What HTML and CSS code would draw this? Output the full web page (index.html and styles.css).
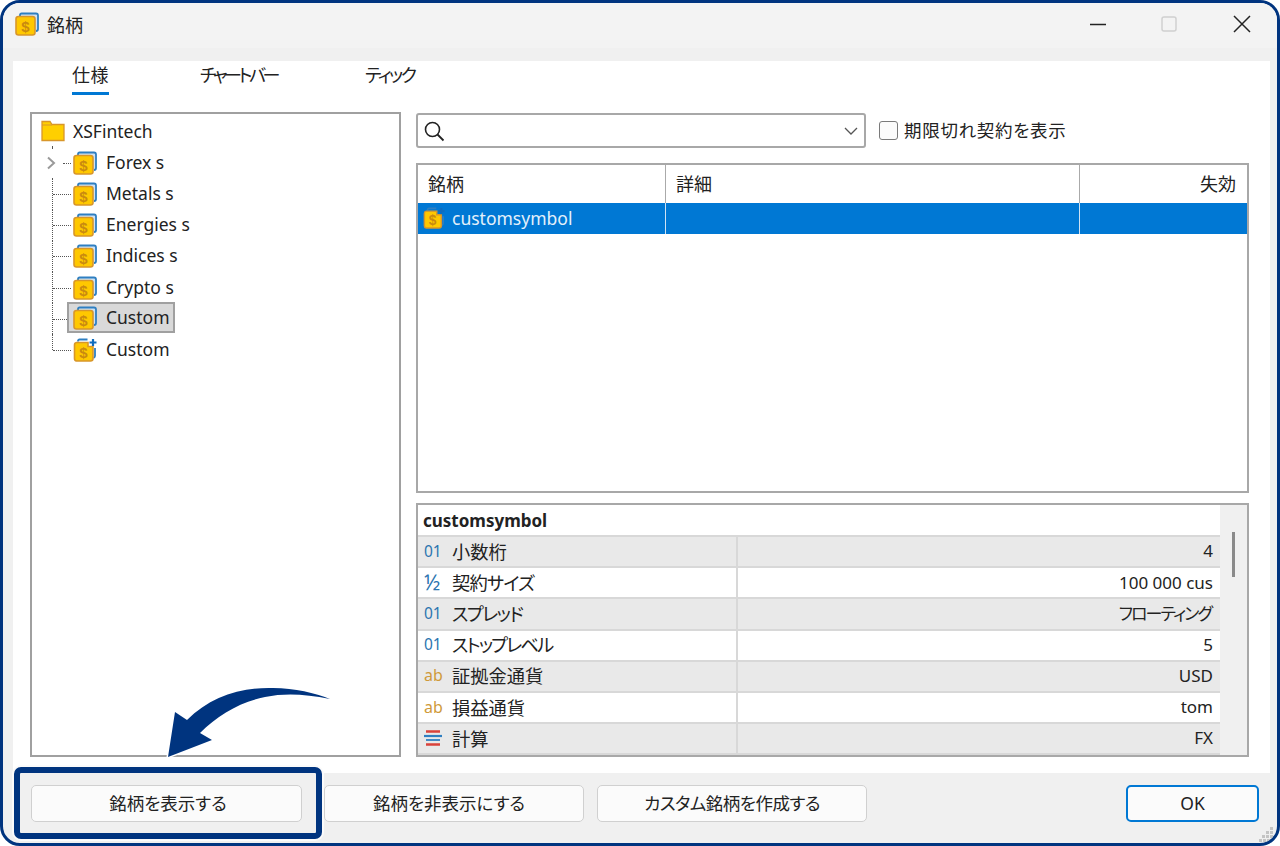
FILE: index.html
```html
<!DOCTYPE html>
<html lang="ja">
<head>
<meta charset="utf-8">
<title>銘柄</title>
<link rel="stylesheet" href="styles.css">
</head>
<body>
<svg class="defs" width="0" height="0" aria-hidden="true">
  <defs>
    <symbol id="coin" viewBox="0 0 24 24">
      <path d="M5 4V3a1.500 1.500 0 0 1 1.500-1.500h14.500a2 2 0 0 1 2 2v13.500a2 2 0 0 1-2 2" fill="#cfe2f3" stroke="#2f7fc1" stroke-width="1.800"/>
      <rect x="1" y="4.500" width="19" height="18.500" rx="2.500" fill="#ffc800" stroke="#d8962a" stroke-width="1.600"/>
      <text x="10.500" y="19.600" class="coin-d">$</text>
    </symbol>
    <symbol id="coinplus" viewBox="0 0 24 24">
      <path d="M5 3.500V3a1.500 1.500 0 0 1 1.500-1.500h8M22 10v8a2 2 0 0 1-1.500 1.800" fill="none" stroke="#2f7fc1" stroke-width="1.800"/>
      <path d="M3.500 4.500h11.500v4h5v12a2.500 2.500 0 0 1-2.500 2.500h-14a2.500 2.500 0 0 1-2-2.500v-13.500a2.500 2.500 0 0 1 2-2.500z" fill="#ffc800" stroke="#d8962a" stroke-width="1.600"/>
      <path d="M20 1v7M16.500 4.500h7" stroke="#0f6cbd" stroke-width="2.200"/>
      <text x="10.500" y="19.600" class="coin-d">$</text>
    </symbol>
  </defs>
</svg>
<div class="window">
  <header class="titlebar">
    <svg class="ic-title"><use href="#coin"/></svg>
    <span class="title">銘柄</span>
    <span class="controls">
      <svg class="ctl" viewBox="0 0 20 20"><path d="M1 10.500h16" stroke="#222" stroke-width="1.500"/></svg>
      <svg class="ctl" viewBox="0 0 20 20"><rect x="3" y="3" width="14" height="14" rx="2" fill="none" stroke="#d0d0d0" stroke-width="1.500"/></svg>
      <svg class="ctl" viewBox="0 0 20 20"><path d="M2 2l16 16M18 2L2 18" stroke="#222" stroke-width="1.500"/></svg>
    </span>
  </header>
  <main class="main">
    <nav class="tabs">
      <span class="tab active">仕様</span>
      <span class="tab t2">チャートバー</span>
      <span class="tab t3">ティック</span>
    </nav>
    <div class="panes">
      <section class="tree">
        <div class="node root">
          <svg class="ic-folder" viewBox="0 0 24 24"><path d="M1 1.500h8l2 3h12v16H1z" fill="#ffcf00" stroke="#d8962a" stroke-width="1.300"/><path d="M1 5h10" stroke="#d8962a" stroke-width="1"/></svg>
          <span>XSFintech</span>
        </div>
        <div class="node child first">
          <svg class="chev" viewBox="0 0 10 14"><path d="M2 1.500l6 5.500-6 5.500" fill="none" stroke="#9a9a9a" stroke-width="2"/></svg>
          <svg class="ic"><use href="#coin"/></svg><span>Forex s</span>
        </div>
        <div class="node child"><svg class="ic"><use href="#coin"/></svg><span>Metals s</span></div>
        <div class="node child"><svg class="ic"><use href="#coin"/></svg><span>Energies s</span></div>
        <div class="node child"><svg class="ic"><use href="#coin"/></svg><span>Indices s</span></div>
        <div class="node child"><svg class="ic"><use href="#coin"/></svg><span>Crypto s</span></div>
        <div class="node child selected"><div class="sel"><svg class="ic"><use href="#coin"/></svg><span>Custom</span></div></div>
        <div class="node child last"><svg class="ic"><use href="#coinplus"/></svg><span>Custom</span></div>
      </section>
      <section class="right">
        <div class="searchrow">
          <div class="search">
            <svg class="mag" viewBox="0 0 22 22"><circle cx="9.500" cy="9.500" r="7" fill="none" stroke="#222" stroke-width="1.600"/><path d="M14.500 14.500l6 6" stroke="#222" stroke-width="1.800"/></svg>
            <svg class="drop" viewBox="0 0 14 8"><path d="M1 1l6 6 6-6" fill="none" stroke="#555" stroke-width="1.300"/></svg>
          </div>
          <span class="check"></span>
          <span class="checklabel">期限切れ契約を表示</span>
        </div>
        <div class="list">
          <div class="lrow lhead">
            <span class="c1">銘柄</span><span class="c2">詳細</span><span class="c3">失効</span>
          </div>
          <div class="lrow lsel">
            <span class="c1"><svg class="ic-s"><use href="#coinplus"/></svg>customsymbol</span><span class="c2"></span><span class="c3"></span>
          </div>
        </div>
        <div class="props">
          <div class="ptable">
            <div class="ptitle">customsymbol</div>
            <div class="prow"><span class="pk"><i class="t blue">01</i>小数桁</span><span class="pv">4</span></div>
            <div class="prow alt"><span class="pk"><i class="t blue big">½</i><span class="k1">契約サイズ</span></span><span class="pv">100 000 cus</span></div>
            <div class="prow"><span class="pk"><i class="t blue">01</i><span class="k2">スプレッド</span></span><span class="pv"><span class="k3">フローティング</span></span></div>
            <div class="prow alt"><span class="pk"><i class="t blue">01</i><span class="k3">ストップレベル</span></span><span class="pv">5</span></div>
            <div class="prow"><span class="pk"><i class="t orange">ab</i>証拠金通貨</span><span class="pv">USD</span></div>
            <div class="prow alt"><span class="pk"><i class="t orange">ab</i>損益通貨</span><span class="pv">tom</span></div>
            <div class="prow"><span class="pk"><i class="t"><svg class="calc" viewBox="0 0 18 16"><path d="M2 1.500h14M2 14.500h14" stroke="#d9423a" stroke-width="2.400" fill="none"/><path d="M0 6h18" stroke="#2f7fc1" stroke-width="2.200"/><path d="M2 10h14" stroke="#2f7fc1" stroke-width="1.800"/></svg></i>計算</span><span class="pv">FX</span></div>
          </div>
          <div class="pscroll"><span class="thumb"></span></div>
        </div>
      </section>
    </div>
  </main>
  <footer class="footer">
    <button class="btn b1">銘柄を表示する</button>
    <button class="btn b2">銘柄を非表示にする</button>
    <button class="btn b3">カスタム銘柄を作成する</button>
    <button class="btn ok">OK</button>
  </footer>
  <svg class="grip" viewBox="0 0 16 16"><g fill="#c4c4c4"><rect x="11" y="1" width="3" height="3"/><rect x="7" y="5" width="3" height="3"/><rect x="11" y="5" width="3" height="3"/><rect x="3" y="9" width="3" height="3"/><rect x="7" y="9" width="3" height="3"/><rect x="11" y="9" width="3" height="3"/><rect x="0" y="13" width="3" height="3"/><rect x="4" y="13" width="3" height="3"/><rect x="8" y="13" width="3" height="3"/></g></svg>
  <div class="highlight"></div>
  <svg class="arrow" viewBox="165 684 170 76"><path d="M168 757L175 712L187 720C210 697 240 687 273 688C295 688 315 693 330 699C305 694 285 693 265 697C240 702 218 715 200 733L212 740Z" fill="#00347f" stroke="#fff" stroke-width="3" paint-order="stroke"/></svg>
</div>
</body>
</html>
```
FILE: styles.css
```css
* { box-sizing: border-box; }
html, body { margin: 0; padding: 0; background: #fff; }
body {
  width: 1280px;
  height: 846px;
  overflow: hidden;
  font-family: "Noto Sans", "Noto Sans CJK JP", sans-serif;
  font-size: 17px;
  color: #222;
  font-feature-settings: "palt";
}
.defs { position: absolute; }
.coin-d { font: 700 15px "Liberation Sans", sans-serif; fill: #c98a10; text-anchor: middle; }

.window {
  position: relative;
  width: 1280px;
  height: 846px;
  border: 3px solid #00347f;
  border-radius: 20px;
  background: #f0f0f0;
  display: flex;
  flex-direction: column;
  overflow: hidden;
}
.titlebar {
  flex: none;
  height: 45px;
  margin-bottom: 13px;
  background: #f3f3f3;
  display: flex;
  align-items: center;
  padding: 0 0 4px 12px;
}
.ic-title { width: 24px; height: 24px; flex: none; }
.title { margin-left: 8px; font-size: 18px; }
.controls { margin-left: auto; display: flex; align-items: center; padding-right: 25px; }
.ctl { width: 20px; height: 20px; flex: none; }
.ctl:nth-child(2) { margin-left: 50px; }
.ctl:nth-child(3) { margin-left: 53px; }

.main {
  flex: none;
  height: 712px;
  margin: 0 7px 0 10px;
  background: #fff;
  padding: 0 21px 16px 17px;
  display: flex;
  flex-direction: column;
}
.tabs { flex: none; height: 51px; display: flex; padding-left: 42px; }
.tab { height: 34px; line-height: 28px; font-size: 18px; color: #222; white-space: nowrap; }
.tab.active { border-bottom: 3px solid #0078d4; letter-spacing: .5px; }
.t2 { margin-left: 91px; letter-spacing: -3.400px; }
.t3 { margin-left: 88px; letter-spacing: -2.500px; }

.panes { flex: 1; min-height: 0; display: flex; gap: 15px; }

.tree {
  flex: none;
  width: 371px;
  border: 2px solid #a0a0a0;
  padding-top: 2px;
  background: #fff;
}
.node {
  position: relative;
  height: 31.200px;
  display: flex;
  align-items: center;
  font-size: 17.500px;
  white-space: nowrap;
}
.node span { padding-bottom: 2px; }
.root { padding-left: 9px; gap: 8px; }
.ic-folder { width: 24px; height: 24px; flex: none; }
.child { padding-left: 41px; gap: 9px; }
.child::before {
  content: "";
  position: absolute;
  left: 20px;
  top: 0;
  bottom: 0;
  border-left: 1px dotted #555;
}
.child::after {
  content: "";
  position: absolute;
  left: 21px;
  width: 18px;
  top: 50%;
  border-top: 1px dotted #555;
}
.child.first::after { left: 31px; width: 8px; }
.child.first::before { top: -1px; height: 2px; bottom: auto; }
.child.last::before { bottom: 50%; }
.chev { position: absolute; left: 14px; top: 9px; width: 10px; height: 14px; background: #fff; z-index: 1; }
.ic { width: 24px; height: 24px; flex: none; }
.sel {
  position: relative;
  z-index: 1;
  display: flex;
  align-items: center;
  gap: 9px;
  height: 31px;
  width: 108px;
  margin: 0 0 2px -6px;
  padding-left: 4px;
  background: #d9d9d9;
  border: 2px solid #a0a0a0;
}

.right { flex: 1; min-width: 0; display: flex; flex-direction: column; }
.searchrow { flex: none; height: 51px; display: flex; align-items: flex-start; padding-top: 1px; }
.search {
  width: 450px;
  height: 35px;
  border: 2px solid #a8a8a8;
  border-radius: 3px;
  display: flex;
  align-items: center;
  justify-content: space-between;
  padding: 0 6px 0 5px;
}
.mag { width: 22px; height: 22px; }
.drop { width: 14px; height: 8px; }
.check {
  width: 19px;
  height: 19px;
  margin: 8px 0 0 13px;
  border: 1.500px solid #7a7a7a;
  border-radius: 3px;
  background: #fbfbfb;
}
.checklabel { margin-left: 6px; line-height: 35px; font-size: 17.500px; letter-spacing: .7px; }

.list { flex: none; height: 330px; border: 2px solid #a8a8a8; background: #fff; }
.lrow { display: grid; grid-template-columns: 247px 414px 1fr; align-items: center; }
.lhead { height: 38px; font-size: 18px; }
.lhead .c1, .lhead .c2, .lhead .c3 { display: flex; align-items: center; height: 38px; padding: 0 0 2px 10px; border-left: 1px solid #aaa; }
.lhead .c1 { border-left: 0; }
.lhead .c3 { justify-content: flex-end; padding-right: 11px; }
.lsel { height: 31px; background: #0078d4; color: #e4f0fb; font-size: 17.500px; }
.lsel .c1, .lsel .c2, .lsel .c3 { display: flex; align-items: center; height: 31px; padding-bottom: 2px; border-left: 1px solid #cfe2f3; }
.lsel .c1 { border-left: 0; padding-left: 5px; }
.ic-s { width: 22px; height: 22px; margin-right: 7px; flex: none; }

.props { flex: none; height: 254px; margin-top: 10px; border: 2px solid #a8a8a8; display: flex; }
.ptable { flex: none; width: 802px; overflow: hidden; }
.ptitle { height: 32px; line-height: 31px; padding-left: 5px; font-weight: 700; font-size: 17px; border-bottom: 2px solid #d8d8d8; }
.prow {
  height: 31.200px;
  display: grid;
  grid-template-columns: 320px 1fr;
  align-items: stretch;
  background: #e9e9e9;
  border-bottom: 2px solid #d8d8d8;
  font-size: 18.300px;
}
.prow.alt { background: #fff; }
.pk { display: flex; align-items: center; padding: 0 0 2px 6px; border-right: 2px solid #d8d8d8; white-space: nowrap; }
.k1 { letter-spacing: -.8px; }
.k2 { letter-spacing: -1.600px; }
.k3 { letter-spacing: -1.900px; }
.pv { display: flex; align-items: center; justify-content: flex-end; padding: 0 7px 2px 0; font-size: 17px; }
.pv .k3 { margin-right: 2px; }
.t { width: 28px; flex: none; font-style: normal; font-size: 15.500px; font-weight: 400; display: flex; align-items: center; }
.blue { color: #2b75b0; }
.orange { color: #cf9a3a; font-size: 16px; }
.big { font-size: 21px; }
.calc { width: 18px; height: 16px; }
.pscroll { flex: 1; background: #f0f0f0; position: relative; display: flex; justify-content: center; padding: 27px 1px 0 0; }
.thumb { width: 3px; height: 45px; background: #8a8a8a; }

.footer {
  flex: none;
  display: flex;
  align-items: flex-start;
  padding: 12px 18px 0 28px;
}
.btn {
  height: 37px;
  border: 1.500px solid #d0d0d0;
  border-radius: 5px;
  background: #fbfbfb;
  font: inherit;
  font-size: 17.500px;
  color: #222;
  padding: 0 0 3px;
}
.b1 { width: 271px; padding-left: 3px; }
.b2 { width: 260px; margin-left: 22px; padding-right: 10px; }
.b3 { width: 270px; margin-left: 13px; letter-spacing: -.5px; }
.ok { width: 133px; margin-left: auto; border: 2px solid #0078d4; padding-bottom: 1px; }

.grip { position: absolute; right: 2px; bottom: 1px; width: 16px; height: 16px; }
.highlight {
  position: absolute;
  left: 11px;
  top: 764px;
  width: 308px;
  height: 72px;
  border: 6px solid #00347f;
  border-radius: 7px;
  box-shadow: 0 0 0 2px #fbfbfb;
}
.arrow { position: absolute; left: 162px; top: 681px; width: 170px; height: 76px; overflow: visible; }
```
